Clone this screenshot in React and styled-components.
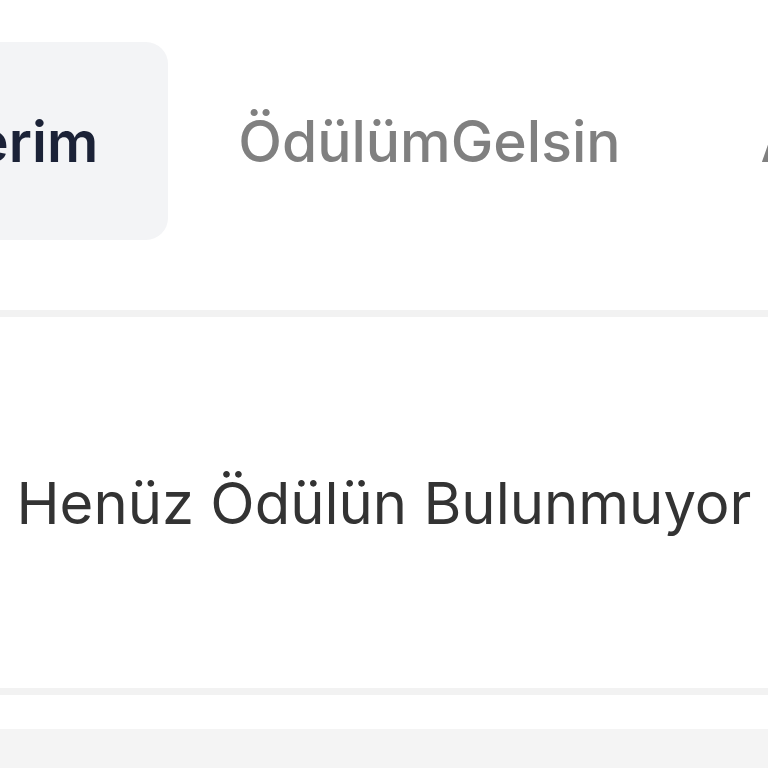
import styled, { createGlobalStyle } from "styled-components";

const Global = createGlobalStyle`
  html, body { margin: 0; padding: 0; background: #fff; }
  body { font-family: Inter, "Noto Sans", sans-serif; overflow: hidden; }
`;

const Page = styled.div`
  width: 768px;
  height: 768px;
  overflow: hidden;
  display: flex;
  flex-direction: column;
`;

const TabBar = styled.div`
  display: flex;
  padding-top: 42px;
  height: 198px;
  margin-left: -239px;
  margin-bottom: 70px;
  white-space: nowrap;
`;

const Tab = styled.div`
  display: flex;
  align-items: center;
  padding: 0 70px;
  border-radius: 22px;
  font-size: 57px;
  font-weight: ${(p) => (p.$active ? 600 : 500)};
  color: ${(p) => (p.$active ? "#1b2237" : "#808080")};
  background: ${(p) => (p.$active ? "#f3f4f6" : "transparent")};
`;

const Divider = styled.div`
  height: 7px;
  background: #f2f2f2;
`;

const Empty = styled.div`
  height: 371px;
  display: flex;
  align-items: center;
  justify-content: center;
  font-size: 58px;
  color: #333;
  white-space: nowrap;
`;

const Gap = styled.div`
  height: 34px;
`;

const Footer = styled.div`
  flex: 1;
  background: #f4f4f4;
`;

export default function App() {
  return (
    <Page>
      <Global />
      <TabBar>
        <Tab $active>Ödüllerim</Tab>
        <Tab>ÖdülümGelsin</Tab>
        <Tab>Arşiv</Tab>
      </TabBar>
      <Divider />
      <Empty>Henüz Ödülün Bulunmuyor</Empty>
      <Divider />
      <Gap />
      <Footer />
    </Page>
  );
}
